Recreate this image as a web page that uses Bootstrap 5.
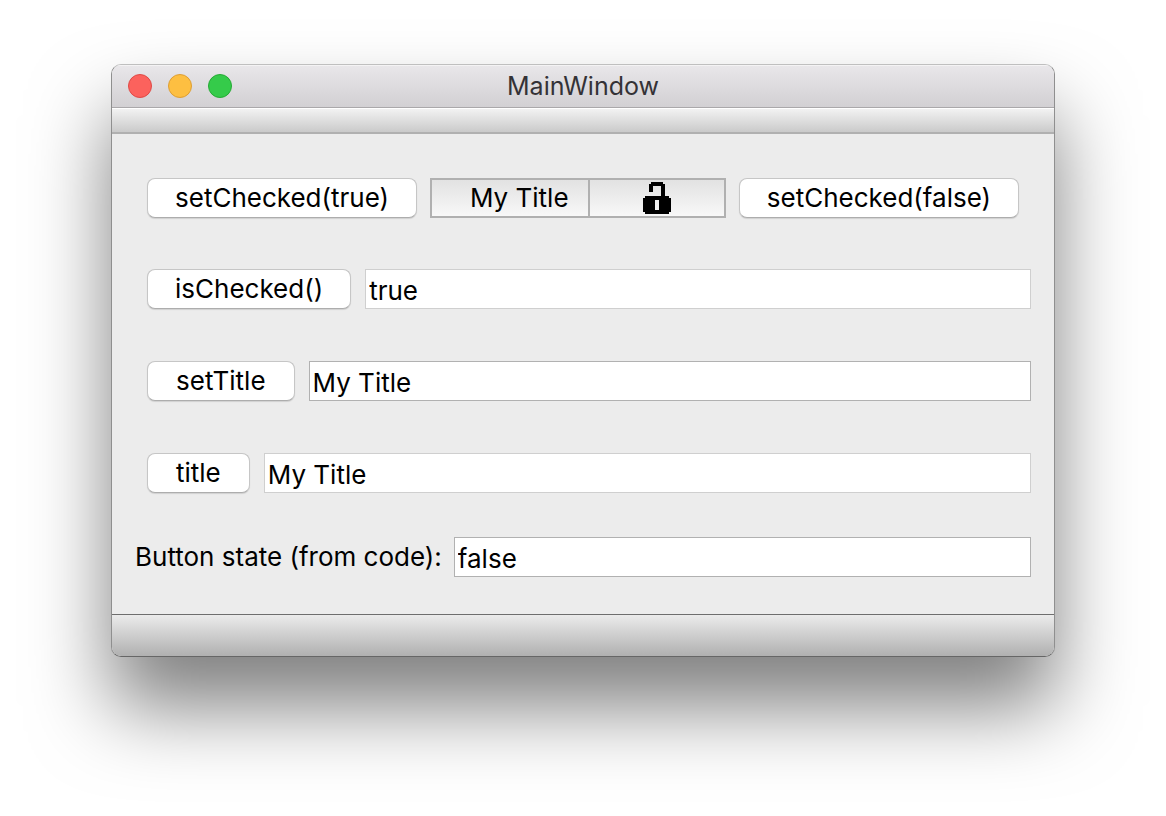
<!DOCTYPE html>
<html lang="en">
<head>
<meta charset="utf-8">
<meta name="viewport" content="width=device-width, initial-scale=1">
<title>MainWindow</title>
<link href="https://cdn.jsdelivr.net/npm/bootstrap@5.3.0/dist/css/bootstrap.min.css" rel="stylesheet">
<style>
body { font-family: Inter, "Liberation Sans", sans-serif; font-size: 26px; line-height: 32px; color: #000; background: #fff; }
.desktop { padding: 64px 111px; }
.app-window { border: 1px solid #8f8f8f; border-top-color: #bfbfbf; border-bottom-color: #666; border-radius: 10px; background: #ececec; overflow: hidden; box-shadow: 0 50px 80px rgba(0,0,0,.5); }
.title-bar { height: 43px; padding: 0 16px; background: linear-gradient(#e9e7ea, #d2d0d3); border-bottom: 1px solid #aaa8aa; box-shadow: inset 0 1px #f4f3f4; color: #343236; }
.title-text { font-size: 25px; line-height: 32px; font-weight: 400; }
.light { width: 24px; height: 24px; border-radius: 50%; border: 1px solid; padding: 0; }
.light-close { background: #fc625d; border-color: #de4a46; }
.light-min { background: #fdbf41; border-color: #dd9e34; }
.light-zoom { background: #35cb4a; border-color: #26aa35; }
.tool-strip { height: 26px; background: linear-gradient(#f2f2f2, #cacaca); border-top: 1px solid #fff; border-bottom: 2px solid #b0b0b0; }
.client { padding: 44px 23px 37px; }
.toggle-row { gap: 13px; padding: 0 12px; margin-bottom: 51px; }
.field-rows { gap: 52px; padding-left: 12px; margin-bottom: 44px; }
.field-row { gap: 14px; }
.state-row { gap: 12px; }
.push { height: 40px; padding: 0 27px; background: #fff; border: 1px solid #c6c6c6; border-bottom-color: #adadad; border-radius: 8px; box-shadow: 0 1px 1px rgba(0,0,0,.12); white-space: nowrap; color: #000; }
.push-short { padding: 0 28px; }
.line-edit { height: 40px; min-width: 0; padding: 2px 3px 0; background: #fff; border: 1px solid #b1b1b1; color: #000; }
.line-edit[readonly] { border-color: #cfcfcf; }
.segments { height: 40px; border: 2px solid #b0b0b0; }
.segment { border: 0; padding: 0 19px; min-width: 0; background: linear-gradient(#e2e2e2, #f8f8f8); color: #000; }
.segment-title { flex: 0 0 54%; border-right: 2px solid #b0b0b0; }
.segment-lock { flex: 1 1 0; }
.status-bar { height: 42px; border-top: 1px solid #6e6e6e; background: linear-gradient(#ebebeb, #b0b0b0); }
</style>
</head>
<body>
<main class="desktop min-vh-100">
  <section class="app-window" aria-label="MainWindow">
    <header class="title-bar position-relative d-flex align-items-center">
      <div class="d-flex gap-3">
        <button type="button" class="light light-close" aria-label="Close"></button>
        <button type="button" class="light light-min" aria-label="Minimize"></button>
        <button type="button" class="light light-zoom" aria-label="Zoom"></button>
      </div>
      <h1 class="title-text position-absolute start-50 translate-middle-x m-0">MainWindow</h1>
    </header>
    <div class="tool-strip"></div>
    <form class="client">
      <div class="toggle-row d-flex">
        <button type="button" class="push">setChecked(true)</button>
        <div class="segments d-flex flex-grow-1">
          <button type="button" class="segment segment-title text-end text-nowrap">My Title</button>
          <button type="button" class="segment segment-lock d-flex align-items-center justify-content-center" aria-label="Unlocked">
            <svg width="28" height="32" viewBox="0 0 14 16" shape-rendering="crispEdges" aria-hidden="true"><path fill="#000" fill-rule="evenodd" d="M4 0h6v1h1v6h2v1h1v7h-1v1H1v-1H0V8h1V7h8V2H5v3H3V1h1zM6 9v5h2V9z"/></svg>
          </button>
        </div>
        <button type="button" class="push">setChecked(false)</button>
      </div>
      <div class="field-rows d-flex flex-column">
        <div class="field-row d-flex">
          <button type="button" class="push">isChecked()</button>
          <input class="line-edit flex-grow-1" type="text" value="true" aria-label="isChecked result" readonly>
        </div>
        <div class="field-row d-flex">
          <button type="button" class="push push-short">setTitle</button>
          <input class="line-edit flex-grow-1" type="text" value="My Title" aria-label="New title">
        </div>
        <div class="field-row d-flex">
          <button type="button" class="push push-short">title</button>
          <input class="line-edit flex-grow-1" type="text" value="My Title" aria-label="Current title" readonly>
        </div>
      </div>
      <div class="state-row d-flex align-items-center">
        <label for="state">Button state (from code):</label>
        <input id="state" class="line-edit flex-grow-1" type="text" value="false">
      </div>
    </form>
    <footer class="status-bar"></footer>
  </section>
</main>
<script src="https://cdn.jsdelivr.net/npm/bootstrap@5.3.0/dist/js/bootstrap.bundle.min.js"></script>
</body>
</html>
